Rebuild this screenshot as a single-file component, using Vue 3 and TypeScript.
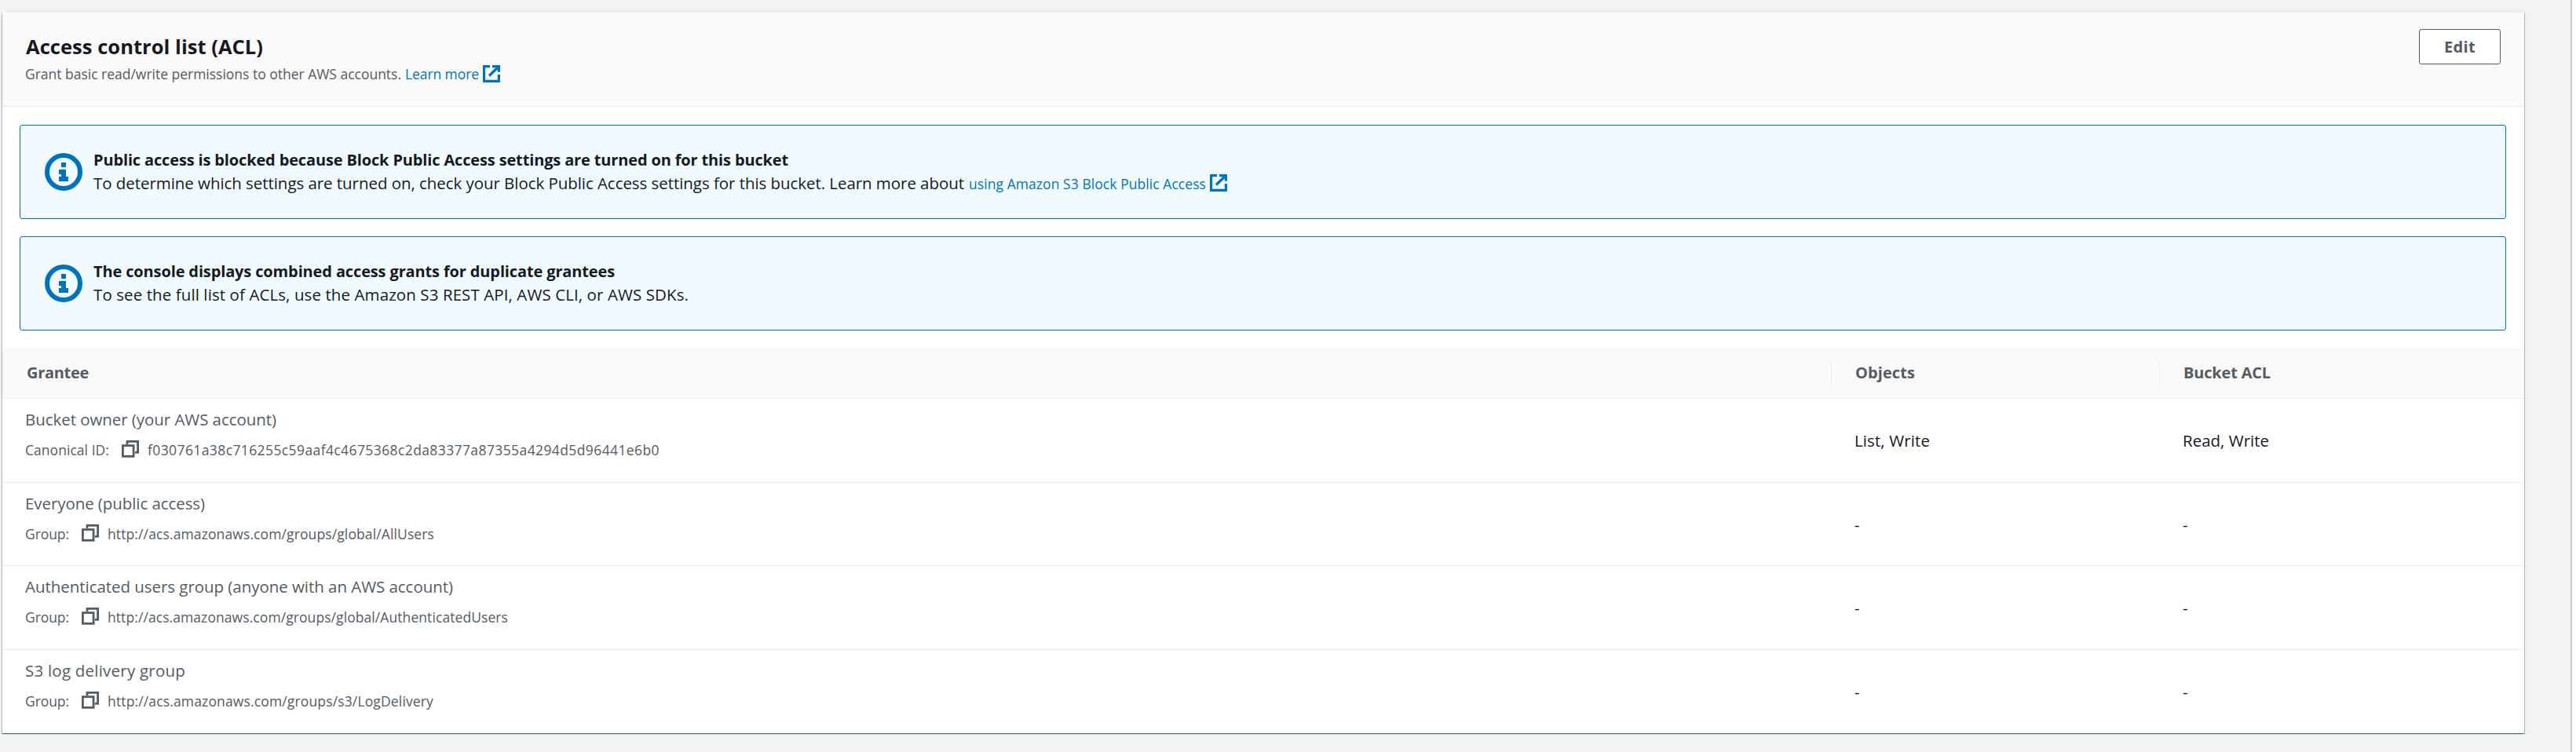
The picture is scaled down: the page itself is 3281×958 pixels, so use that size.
<script setup lang="ts">
interface Grant {
  name: string
  nameWidth: number
  label: string
  labelWidth: number
  value: string
  valueWidth: number
  objects: string
  objectsWidth: number
  acl: string
  aclWidth: number
}

const grants: Grant[] = [
  {
    name: 'Bucket owner (your AWS account)', nameWidth: 320,
    label: 'Canonical ID:', labelWidth: 107,
    value: 'f030761a38c716255c59aaf4c4675368c2da83377a87355a4294d5d96441e6b0', valueWidth: 652,
    objects: 'List, Write', objectsWidth: 96,
    acl: 'Read, Write', aclWidth: 110,
  },
  {
    name: 'Everyone (public access)', nameWidth: 229,
    label: 'Group:', labelWidth: 56,
    value: 'http://acs.amazonaws.com/groups/global/AllUsers', valueWidth: 416,
    objects: '-', objectsWidth: 8, acl: '-', aclWidth: 8,
  },
  {
    name: 'Authenticated users group (anyone with an AWS account)', nameWidth: 545,
    label: 'Group:', labelWidth: 56,
    value: 'http://acs.amazonaws.com/groups/global/AuthenticatedUsers', valueWidth: 510,
    objects: '-', objectsWidth: 8, acl: '-', aclWidth: 8,
  },
  {
    name: 'S3 log delivery group', nameWidth: 204,
    label: 'Group:', labelWidth: 56,
    value: 'http://acs.amazonaws.com/groups/s3/LogDelivery', valueWidth: 415,
    objects: '-', objectsWidth: 8, acl: '-', aclWidth: 8,
  },
]

// Tracks a text run so that it fills the given width in pixels.
const vFit = {
  mounted(el: HTMLElement, binding: { value: number }) {
    const count = (el.textContent ?? '').length
    if (count < 2) return
    const natural = el.getBoundingClientRect().width
    el.style.letterSpacing = `${(binding.value - natural) / count}px`
  },
}
</script>

<template>
  <div class="page">
    <main class="content">
      <section class="card">
        <header class="card-header">
          <div class="heading">
            <h2><span v-fit="302">Access control list (ACL)</span></h2>
            <p class="description">
              <span v-fit="479">Grant basic read/write permissions to other AWS accounts.</span>
              <a class="link first-link"><span v-fit="94">Learn more</span>
                <svg class="external" viewBox="0 0 22 22"><path d="M9 1.6H1.6v18.8h18.8V12M12 1.6h8.4v7.2M20 2L8 13.5" /></svg>
              </a>
            </p>
          </div>
          <button class="edit"><span v-fit="40">Edit</span></button>
        </header>

        <div class="alerts">
          <div class="alert">
            <svg class="info" viewBox="0 0 48 48"><circle cx="24" cy="24" r="21" /><path d="M21 12h6v6h-6zM18 21h9v9h3v6H18v-6h3v-3h-3z" /></svg>
            <div class="alert-body">
              <strong><span v-fit="885">Public access is blocked because Block Public Access settings are turned on for this bucket</span></strong>
              <p>
                <span v-fit="1109">To determine which settings are turned on, check your Block Public Access settings for this bucket. Learn more about</span>
                <a class="link alert-link"><span v-fit="302">using Amazon S3 Block Public Access</span>
                  <svg class="external" viewBox="0 0 22 22"><path d="M9 1.6H1.6v18.8h18.8V12M12 1.6h8.4v7.2M20 2L8 13.5" /></svg>
                </a>
              </p>
            </div>
          </div>
          <div class="alert">
            <svg class="info" viewBox="0 0 48 48"><circle cx="24" cy="24" r="21" /><path d="M21 12h6v6h-6zM18 21h9v9h3v6H18v-6h3v-3h-3z" /></svg>
            <div class="alert-body">
              <strong><span v-fit="664">The console displays combined access grants for duplicate grantees</span></strong>
              <p><span v-fit="758">To see the full list of ACLs, use the Amazon S3 REST API, AWS CLI, or AWS SDKs.</span></p>
            </div>
          </div>
        </div>

        <div class="grid table-head">
          <div class="th"><span v-fit="79">Grantee</span></div>
          <div class="th split"><span v-fit="76">Objects</span></div>
          <div class="th split"><span v-fit="111">Bucket ACL</span></div>
        </div>
        <div v-for="grant in grants" :key="grant.name" class="grid row">
          <div class="grantee">
            <div class="name"><span v-fit="grant.nameWidth">{{ grant.name }}</span></div>
            <div class="detail">
              <span v-fit="grant.labelWidth">{{ grant.label }}</span>
              <svg class="copy" viewBox="0 0 22 22"><path d="M7 5V1.4h13.6v14H17" /><path d="M1.4 6.6h13.7v13.7H1.4z" /></svg>
              <span v-fit="grant.valueWidth">{{ grant.value }}</span>
            </div>
          </div>
          <div class="permission"><span v-fit="grant.objectsWidth">{{ grant.objects }}</span></div>
          <div class="permission"><span v-fit="grant.aclWidth">{{ grant.acl }}</span></div>
        </div>
      </section>
    </main>
    <div class="side-rail"></div>
  </div>
</template>

<style>
body {
  margin: 0;
  background: #f2f3f3;
}
</style>

<style scoped>
.page {
  display: flex;
  box-sizing: border-box;
  width: 3281px;
  height: 958px;
  overflow: hidden;
  background: #f1f3f3;
  color: #16191f;
  font: 20.5px/30px "Open Sans", "Noto Sans", sans-serif;
}
.page span {
  display: inline-block;
  white-space: nowrap;
}
.content {
  flex: 1;
  padding: 16px 60px 0 3px;
}
.side-rail {
  box-sizing: border-box;
  width: 7px;
  border-left: 1px solid #c0c8c9;
  background: #fff;
  box-shadow: -1px 0 1px rgba(0, 28, 36, 0.12);
}
.card {
  box-sizing: border-box;
  width: 3212px;
  height: 918px;
  background: #fff;
  box-shadow: 0 -1px 0 #eaeded, 0 1px 1px rgba(0, 28, 36, 0.45), 1px 1px 1px rgba(0, 28, 36, 0.2), -1px 1px 1px rgba(0, 28, 36, 0.2);
}
.card-header {
  display: flex;
  justify-content: space-between;
  align-items: flex-start;
  box-sizing: border-box;
  height: 120px;
  padding: 21px 30px 0;
  border-bottom: 1px solid #eaeded;
  background: #fafafa;
}
.heading {
  padding-top: 5px;
}
h2,
p {
  margin: 0;
}
h2 {
  font-size: 25.5px;
  line-height: 34px;
  font-weight: 700;
}
.description {
  display: flex;
  margin-top: 5px;
  margin-left: -1px;
  color: #545b64;
  font-size: 17.5px;
  line-height: 26px;
}
.link {
  display: inline-flex;
  align-items: center;
  color: #0073bb;
  font-size: 17.5px;
}
.first-link {
  margin-left: 5px;
}
.external {
  width: 22px;
  height: 22px;
  margin-left: 5px;
  fill: none;
  stroke: #0073bb;
  stroke-width: 3.2;
}
.edit {
  box-sizing: border-box;
  width: 104px;
  height: 45px;
  padding: 0;
  border: 1px solid #545b64;
  border-radius: 3px;
  background: #fff;
  color: #545b64;
  font: 700 20px/30px "Open Sans", "Noto Sans", sans-serif;
}
.alerts {
  display: flex;
  flex-direction: column;
  gap: 22px;
  padding: 23px 23px 23px 22px;
}
.alert {
  display: flex;
  gap: 14px;
  box-sizing: border-box;
  height: 120px;
  padding: 29px 31px 27px;
  border: 1px solid #0073bb;
  border-radius: 3px;
  background: #f1faff;
}
.info {
  width: 48px;
  height: 48px;
  margin-top: 6px;
  fill: #0073bb;
}
.info circle {
  fill: none;
  stroke: #0073bb;
  stroke-width: 6;
}
.alert-body strong {
  display: block;
  font-size: 20px;
  font-weight: 700;
}
.alert-body p {
  display: flex;
}
.alert-body p > span {
  margin-top: -1px;
}
.alert-link {
  margin-left: 6px;
}
.alert-link .external {
  margin-top: -2px;
}
.grid {
  display: grid;
  grid-template-columns: 2329px 418px 1fr;
  box-sizing: border-box;
}
.table-head {
  height: 64px;
  padding-top: 16px;
  border-bottom: 1px solid #eaeded;
  background: #fafafa;
  color: #545b64;
  font-size: 20px;
  font-weight: 700;
}
.th {
  box-sizing: border-box;
  height: 31px;
  padding-left: 31px;
}
.split {
  padding-left: 30px;
  border-left: 1px solid #eaeded;
}
.row {
  height: 106.66px;
}
.row:not(:last-child) {
  border-bottom: 1px solid #eaeded;
}
.grantee {
  padding: 11px 0 0 29px;
  color: #545b64;
}
.detail {
  display: flex;
  align-items: center;
  margin-top: 10px;
  font-size: 17.5px;
  line-height: 28px;
}
.copy {
  width: 22px;
  height: 22px;
  margin: 0 11px 2px 16px;
  fill: none;
  stroke: #545b64;
  stroke-width: 2.8;
}
.permission {
  padding: 38px 0 0 30px;
}
</style>
